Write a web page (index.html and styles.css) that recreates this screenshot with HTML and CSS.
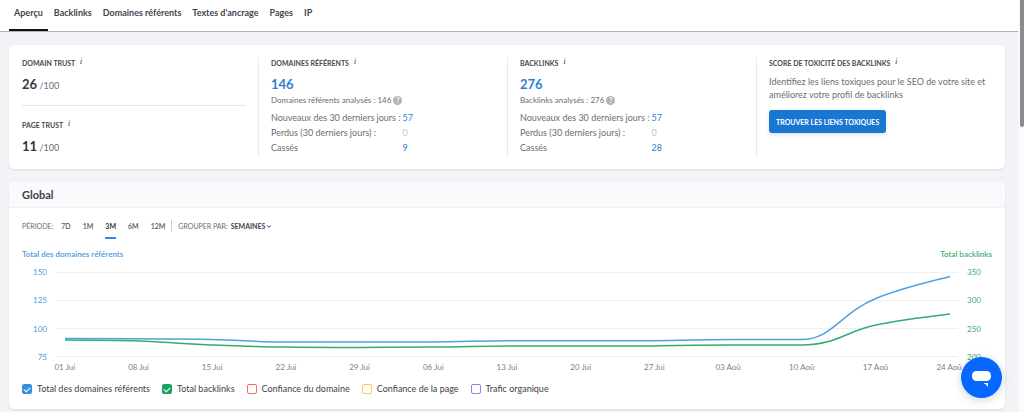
FILE: index.html
```html
<!DOCTYPE html>
<html lang="fr">

	<head>
		<meta charset="UTF-8">
		<title>Backlinks - Aperçu</title>
		<link rel="stylesheet" href="styles.css">
	</head>

	<body>
		<main>
			<nav class="tabs">
				<a class="active" href="#apercu">Aperçu</a>
				<a href="#backlinks">Backlinks</a>
				<a href="#domaines">Domaines référents</a>
				<a href="#textes">Textes d'ancrage</a>
				<a href="#pages">Pages</a>
				<a href="#ip">IP</a>
			</nav>

			<section class="card stats">
				<div class="col">
					<div class="trust">
						<h3>Domain trust <i>i</i></h3>
						<p class="score"><b>26</b> /100</p>
					</div>
					<div class="trust">
						<h3>Page trust <i>i</i></h3>
						<p class="score"><b>11</b> /100</p>
					</div>
				</div>
				<div class="col">
					<h3>Domaines référents <i>i</i></h3>
					<a class="total" href="#domaines">146</a>
					<p class="analysed">Domaines référents analysés : 146 <span class="help">?</span></p>
					<table>
						<tr><th>Nouveaux des 30 derniers jours :</th><td><a href="#new">57</a></td></tr>
						<tr><th>Perdus (30 derniers jours) :</th><td>0</td></tr>
						<tr><th>Cassés</th><td><a href="#broken">9</a></td></tr>
					</table>
				</div>
				<div class="col">
					<h3>Backlinks <i>i</i></h3>
					<a class="total" href="#backlinks">276</a>
					<p class="analysed">Backlinks analysés : 276 <span class="help">?</span></p>
					<table>
						<tr><th>Nouveaux des 30 derniers jours :</th><td><a href="#new">57</a></td></tr>
						<tr><th>Perdus (30 derniers jours) :</th><td>0</td></tr>
						<tr><th>Cassés</th><td><a href="#broken">28</a></td></tr>
					</table>
				</div>
				<div class="col">
					<h3>Score de toxicité des backlinks <i>i</i></h3>
					<p class="text">Identifiez les liens toxiques pour le SEO de votre site et améliorez votre profil de backlinks</p>
					<button class="find">Trouver les liens toxiques</button>
				</div>
			</section>

			<section class="card">
				<h2>Global</h2>
				<div class="filters">
					<span>Période:</span>
					<div class="periods">
						<button>7D</button>
						<button>1M</button>
						<button class="active">3M</button>
						<button>6M</button>
						<button>12M</button>
					</div>
					<label for="group">Grouper par:</label>
					<select id="group">
						<option>SEMAINES</option>
					</select>
					<svg class="caret" viewBox="0 0 4 3"><path d="M0 0.5 L2 2.2 L4 0.5" /></svg>
				</div>

				<div class="chart">
					<div class="names">
						<span class="blue">Total des domaines référents</span>
						<span class="green">Total backlinks</span>
					</div>
					<div class="plot">
						<div class="axis left">
							<span>150</span>
							<span>125</span>
							<span>100</span>
							<span>75</span>
						</div>
						<svg viewBox="0 0 901 85" preserveAspectRatio="none">
							<path class="grid" d="M0 0.5H901M0 28.5H901M0 56.5H901M0 84.5H901" />
							<path class="line green" d="M9 68 C34 68 58 68 83 69 C107 70 132 72 156 73 C181 74 205 75 230 75 C279 76 328 75 377 75 C402 75 426 74 451 74 C500 74 549 74 598 74 C623 73 647 73 672 73 L745 73 C780 73 789 59 819 53 C843 48 868 45 893 42" />
							<path class="line blue" d="M9 66.5 C58 66.5 107 66.5 156 67.5 C181 68 205 70 230 70 L377 70 C402 70 426 68.7 451 68.7 L598 68.7 C623 68.7 647 67.5 672 67.5 L745 67.5 C775 67.5 785 40 819 26.5 C843 16.5 868 11 893 4.5" />
						</svg>
						<div class="axis right">
							<span>350</span>
							<span>300</span>
							<span>250</span>
							<span>200</span>
						</div>
					</div>
					<div class="dates">
						<span>01 Jui</span>
						<span>08 Jui</span>
						<span>15 Jui</span>
						<span>22 Jui</span>
						<span>29 Jui</span>
						<span>06 Jui</span>
						<span>13 Jui</span>
						<span>20 Jui</span>
						<span>27 Jui</span>
						<span>03 Aoû</span>
						<span>10 Aoû</span>
						<span>17 Aoû</span>
						<span>24 Aoû</span>
					</div>
				</div>

				<div class="legend">
					<label class="c-blue"><input type="checkbox" checked>Total des domaines référents</label>
					<label class="c-green"><input type="checkbox" checked>Total backlinks</label>
					<label class="c-red"><input type="checkbox">Confiance du domaine</label>
					<label class="c-yellow"><input type="checkbox">Confiance de la page</label>
					<label class="c-purple"><input type="checkbox">Trafic organique</label>
				</div>
			</section>
		</main>

		<div class="scroll"></div>

		<button class="chat" aria-label="Chat">
			<svg viewBox="0 0 41 41">
				<rect x="11" y="14" width="19" height="10" rx="4.5" />
				<path d="M22.500 26H27V30Q25.500 27.500 22.500 26Z" />
			</svg>
		</button>
	</body>

</html>
```
FILE: styles.css
```css
* {
	margin: 0;
	padding: 0;
	box-sizing: border-box;
}

body {
	display: flex;
	min-height: 100vh;
	background: #f2f3f7;
	font: 9px/12px Lato, "Noto Sans", sans-serif;
	color: #6a6e73;
}

main {
	flex: 1;
}

a {
	color: #2a7fd4;
	text-decoration: none;
}

button,
select {
	border: 0;
	background: none;
	font: inherit;
	color: inherit;
	cursor: pointer;
}

.tabs {
	display: flex;
	gap: 1px;
	height: 32px;
	padding-left: 9px;
	background: #fff;
	border-bottom: 1px solid #a9b3c0;
}

.tabs a {
	padding: 7px 5px 0;
	font-weight: 700;
	color: #43464b;
}

.tabs .active {
	border-bottom: 2px solid #111;
}

.card {
	margin: 13px 13px 0 9px;
	background: #fff;
	border-radius: 5px;
	box-shadow: 0 1px 2px #dcdee4;
	overflow: hidden;
}

.stats {
	display: grid;
	grid-template-columns: repeat(4, 1fr);
	padding: 12px 0;
}

.col {
	height: 100px;
	padding: 0 12px;
	border-left: 1px solid #e8eaf0;
}

.col:first-child {
	padding-left: 13px;
	border-left: 0;
}

h3 {
	font-size: 7px;
	line-height: 12px;
	font-weight: 700;
	text-transform: uppercase;
	color: #46494e;
}

h3 i {
	margin-left: 3px;
	font: italic 9px/8px "Liberation Serif", serif;
	text-transform: none;
	vertical-align: 2px;
}

.trust + .trust {
	margin-top: 10px;
	padding-top: 13px;
	border-top: 1px solid #e4e6ea;
}

.score {
	margin-top: 6px;
	line-height: 18px;
}

.score b {
	font-size: 13px;
	font-weight: 700;
	color: #33363b;
}

.total {
	display: block;
	margin-top: 6px;
	font-size: 13px;
	line-height: 18px;
	font-weight: 700;
}

.analysed {
	margin-top: 1px;
	font-size: 8px;
}

.help {
	display: inline-block;
	width: 9px;
	border-radius: 50%;
	background: #b4b4b4;
	color: #fff;
	font-size: 7px;
	line-height: 9px;
	font-weight: 700;
	text-align: center;
}

table {
	margin-top: 4px;
	border-collapse: collapse;
	line-height: 15px;
}

th {
	padding-right: 2px;
	font-weight: 400;
	text-align: left;
}

td {
	color: #c4c6ca;
}

.text {
	margin-top: 6px;
	line-height: 13px;
}

.find {
	height: 23px;
	margin-top: 9px;
	padding: 0 7px;
	border-radius: 3px;
	background: #1976d2;
	box-shadow: 0 2px 4px #e0e2e8;
	color: #fff;
	font-size: 7px;
	font-weight: 700;
	text-transform: uppercase;
}

h2 {
	padding: 0 13px;
	background: #fafafc;
	border-bottom: 1px solid #f0f1f5;
	font-size: 11px;
	line-height: 25px;
	font-weight: 700;
	color: #404348;
}

.filters {
	display: flex;
	align-items: center;
	height: 12px;
	margin: 12px 13px 0;
	font-size: 7px;
	text-transform: uppercase;
}

.periods {
	display: flex;
	gap: 12px;
	margin-left: 8px;
	padding-right: 6px;
	border-right: 1px solid #c8ccd4;
}

.periods button {
	position: relative;
	font-weight: 600;
	color: #55585e;
}

.periods .active {
	font-weight: 700;
	color: #33363b;
}

.periods .active::after {
	content: "";
	position: absolute;
	left: 0;
	right: 0;
	bottom: -7px;
	height: 2px;
	background: #3a86dc;
}

.filters label {
	margin-left: 6px;
}

.filters select {
	margin-left: 3px;
	appearance: none;
	font-weight: 700;
	color: #3b4450;
}

.caret {
	width: 4px;
	height: 3px;
	margin-left: 1px;
	fill: none;
	stroke: #3b4450;
}

.chart {
	margin: 16px 13px 0;
	font-size: 8px;
}

.names {
	display: flex;
	justify-content: space-between;
	font-weight: 600;
}

.names .blue,
.left {
	color: #4a9bdc;
}

.names .green,
.right {
	color: #3fae78;
}

.plot {
	display: flex;
	height: 97px;
	margin-top: 6px;
}

.plot svg {
	flex: 1;
	min-width: 0;
	height: 85px;
	margin: 6px 0;
}

.plot path {
	fill: none;
	vector-effect: non-scaling-stroke;
}

.grid {
	stroke: #eeeff1;
}

.line {
	stroke-width: 1.5;
}

.line.blue {
	stroke: #4fa1e0;
}

.line.green {
	stroke: #31ad70;
}

.axis {
	display: flex;
	flex-direction: column;
	justify-content: space-between;
	width: 34px;
}

.left {
	padding-right: 9px;
	text-align: right;
}

.right {
	padding-left: 9px;
}

.dates {
	display: grid;
	grid-template-columns: repeat(13, 1fr);
	margin: 0 6px;
	line-height: 9px;
	text-align: center;
	color: #7d8085;
}

.legend {
	display: flex;
	gap: 12px;
	padding: 11px 13px 14px;
	color: #3c3f44;
}

.legend label {
	display: flex;
	align-items: center;
	gap: 5px;
}

.legend input {
	appearance: none;
	width: 10px;
	height: 10px;
	border: 1px solid currentColor;
	border-radius: 2px;
}

.legend input:checked::after {
	content: "";
	display: block;
	width: 5px;
	height: 3px;
	margin: 2px auto;
	border: solid #fff;
	border-width: 0 0 1px 1px;
	transform: rotate(-45deg);
}

.c-blue input {
	background: #3490dc;
	border-color: #3490dc;
}

.c-green input {
	background: #16a35f;
	border-color: #16a35f;
}

.c-red input {
	border-color: #f8705c;
}

.c-yellow input {
	border-color: #fbc75a;
}

.c-purple input {
	border-color: #8d80f8;
}

.scroll {
	width: 6px;
	padding-left: 2px;
	background: #fafafa;
}

.scroll::before {
	content: "";
	display: block;
	height: 127px;
	border-radius: 0 0 2px 2px;
	background: #8b8b8b;
}

.chat {
	position: fixed;
	right: 22px;
	bottom: 14px;
	width: 41px;
	height: 41px;
	border-radius: 50%;
	background: #0567ff;
	box-shadow: 0 2px 10px rgba(60, 90, 90, 0.25);
}

.chat svg {
	display: block;
	fill: #fff;
}
```
